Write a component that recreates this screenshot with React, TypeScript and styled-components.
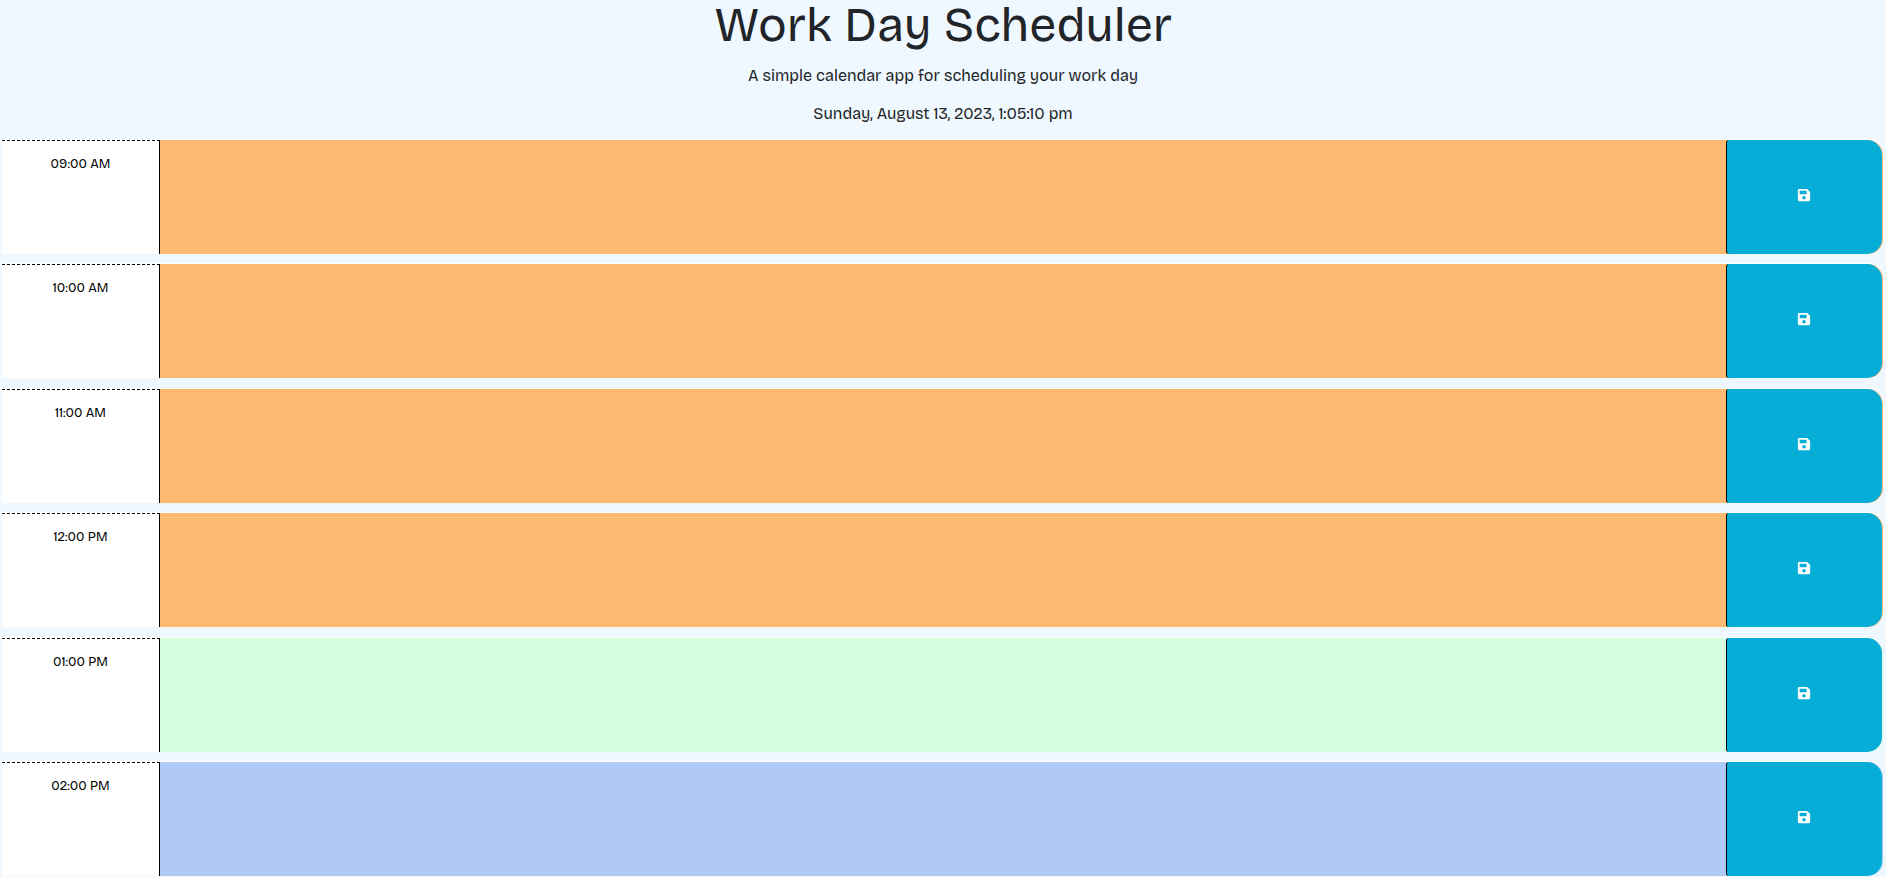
import React from "react";
import styled, { createGlobalStyle } from "styled-components";
import { FaSave } from "react-icons/fa";

type Phase = "past" | "present" | "future";

const phaseColors: Record<Phase, string> = {
  past: "#ffba72",
  present: "#d6ffe2",
  future: "#afcaf5",
};

const GlobalStyle = createGlobalStyle`
  *, *::before, *::after {
    box-sizing: border-box;
  }

  body {
    margin: 0;
    background: #f0f8ff;
    color: #212529;
    font-family: "Bricolage Grotesque", Inter, "Liberation Sans", sans-serif;
    font-size: 16px;
    line-height: 24px;
  }
`;

const Page = styled.div`
  display: flex;
  flex-direction: column;
  min-height: 100vh;
`;

const Header = styled.header`
  display: flex;
  flex-direction: column;
  align-items: center;
  gap: 14px;
  padding-bottom: 14px;
  text-align: center;
`;

const Title = styled.h1`
  margin: 0;
  font-family: "Bricolage Grotesque 48pt", "Bricolage Grotesque", Inter, "Liberation Sans", sans-serif;
  font-size: 48px;
  font-weight: 400;
  line-height: 50px;
`;

const Line = styled.p`
  margin: 0;
`;

const Schedule = styled.main`
  display: flex;
  flex: 1;
  flex-direction: column;
  justify-content: space-between;
  gap: 10px;
  padding: 0 3px 1px 2px;
`;

const TimeBlock = styled.section<{ $phase: Phase }>`
  display: grid;
  grid-template-columns: 158px 1fr 156px;
  height: 114px;
  padding-right: 1px;
  border-radius: 0 15px 15px 0;
  background: ${({ $phase }) => phaseColors[$phase]};
  box-shadow: 0 -1px 0 #ffffff;
`;

const Hour = styled.label`
  padding-top: 11px;
  border-top: 1px dashed #000000;
  border-right: 1px solid #000000;
  background: #ffffff;
  color: #000000;
  font-size: 13px;
  text-align: center;
`;

const Entry = styled.textarea`
  width: 100%;
  height: 100%;
  padding: 8px;
  border: none;
  outline: none;
  resize: none;
  background: transparent;
  color: #000000;
  font: inherit;
`;

const SaveButton = styled.button`
  display: flex;
  align-items: center;
  justify-content: center;
  padding: 0 2px 4px 0;
  border: none;
  border-left: 1px solid #000000;
  border-radius: 3px 15px 15px 3px;
  background: #06aed7;
  color: #ffffff;
  font-size: 14px;
  cursor: pointer;
`;

const blocks: { id: string; label: string; phase: Phase }[] = [
  { id: "hour-9", label: "09:00 AM", phase: "past" },
  { id: "hour-10", label: "10:00 AM", phase: "past" },
  { id: "hour-11", label: "11:00 AM", phase: "past" },
  { id: "hour-12", label: "12:00 PM", phase: "past" },
  { id: "hour-13", label: "01:00 PM", phase: "present" },
  { id: "hour-14", label: "02:00 PM", phase: "future" },
];

export default function App() {
  return (
    <Page>
      <GlobalStyle />
      <Header>
        <Title>Work Day Scheduler</Title>
        <Line>A simple calendar app for scheduling your work day</Line>
        <Line>Sunday, August 13, 2023, 1:05:10 pm</Line>
      </Header>
      <Schedule>
        {blocks.map(({ id, label, phase }) => (
          <TimeBlock key={id} $phase={phase}>
            <Hour htmlFor={id}>{label}</Hour>
            <Entry id={id} />
            <SaveButton type="button" aria-label={`Save ${label}`}>
              <FaSave aria-hidden="true" />
            </SaveButton>
          </TimeBlock>
        ))}
      </Schedule>
    </Page>
  );
}
